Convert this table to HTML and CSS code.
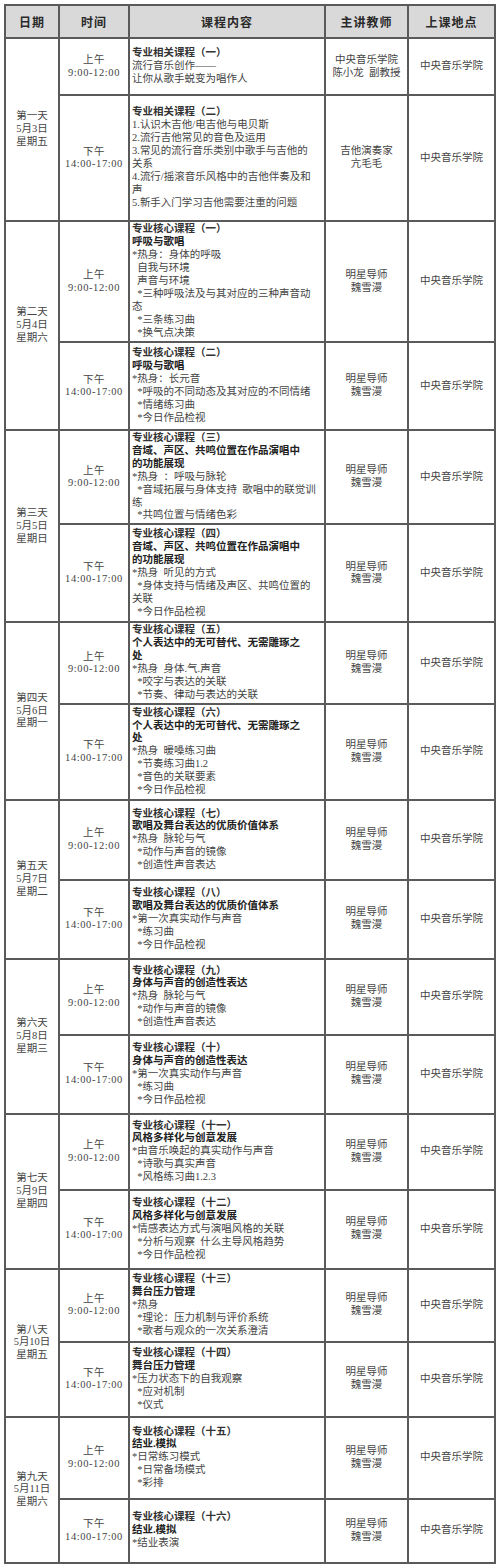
FILE: index.html
```html
<!DOCTYPE html>
<html lang="zh">
<head>
<meta charset="utf-8">
<title>课程安排</title>
<link rel="stylesheet" href="styles.css">
</head>
<body>
<div class="page">
<table class="sched">
<colgroup><col class="c-date"><col class="c-time"><col class="c-course"><col class="c-teacher"><col class="c-place"></colgroup>
<thead>
<tr class="h33"><th>日期</th><th>时间</th><th>课程内容</th><th>主讲教师</th><th>上课地点</th></tr>
</thead>
<tbody>
<tr class="h57">
<td class="date" rowspan="2"><div>第一天</div><div>5月3日</div><div>星期五</div></td>
<td class="time"><div>上午</div><div>9:00-12:00</div></td>
<td class="course"><div class="t1">专业相关课程（一）</div><div>流行音乐创作——</div><div>让你从歌手蜕变为唱作人</div></td>
<td class="teacher"><div>中央音乐学院</div><div>陈小龙&ensp;副教授</div></td>
<td class="place">中央音乐学院</td>
</tr>
<tr class="h126">
<td class="time"><div>下午</div><div>14:00-17:00</div></td>
<td class="course"><div class="t1">专业相关课程（二）</div><div>1.认识木吉他/电吉他与电贝斯</div><div>2.流行吉他常见的音色及运用</div><div>3.常见的流行音乐类别中歌手与吉他的</div><div>关系</div><div>4.流行/摇滚音乐风格中的吉他伴奏及和</div><div>声</div><div>5.新手入门学习吉他需要注重的问题</div></td>
<td class="teacher"><div>吉他演奏家</div><div>亢毛毛</div></td>
<td class="place">中央音乐学院</td>
</tr>

<tr class="h121">
<td class="date" rowspan="2"><div>第二天</div><div>5月4日</div><div>星期六</div></td>
<td class="time"><div>上午</div><div>9:00-12:00</div></td>
<td class="course"><div class="t1">专业核心课程（一）</div><div class="t2">呼吸与歌唱</div><div>*热身：身体的呼吸</div><div>&ensp;自我与环境</div><div>&ensp;声音与环境</div><div>&ensp;*三种呼吸法及与其对应的三种声音动</div><div>态</div><div>&ensp;*三条练习曲</div><div>&ensp;*换气点决策</div></td>
<td class="teacher"><div>明星导师</div><div>魏雪漫</div></td>
<td class="place">中央音乐学院</td>
</tr>
<tr class="h88">
<td class="time"><div>下午</div><div>14:00-17:00</div></td>
<td class="course"><div class="t1">专业核心课程（二）</div><div class="t2">呼吸与歌唱</div><div>*热身：长元音</div><div>&ensp;*呼吸的不同动态及其对应的不同情绪</div><div>&ensp;*情绪练习曲</div><div>&ensp;*今日作品检视</div></td>
<td class="teacher"><div>明星导师</div><div>魏雪漫</div></td>
<td class="place">中央音乐学院</td>
</tr>

<tr class="h94">
<td class="date" rowspan="2"><div>第三天</div><div>5月5日</div><div>星期日</div></td>
<td class="time"><div>上午</div><div>9:00-12:00</div></td>
<td class="course"><div class="t1">专业核心课程（三）</div><div class="t2">音域、声区、共鸣位置在作品演唱中</div><div class="t2">的功能展现</div><div>*热身&ensp;：呼吸与脉轮</div><div>&ensp;*音域拓展与身体支持&ensp;歌唱中的联觉训</div><div>练</div><div>&ensp;*共鸣位置与情绪色彩</div></td>
<td class="teacher"><div>明星导师</div><div>魏雪漫</div></td>
<td class="place">中央音乐学院</td>
</tr>
<tr class="h98">
<td class="time"><div>下午</div><div>14:00-17:00</div></td>
<td class="course"><div class="t1">专业核心课程（四）</div><div class="t2">音域、声区、共鸣位置在作品演唱中</div><div class="t2">的功能展现</div><div>*热身&ensp;听见的方式</div><div>&ensp;*身体支持与情绪及声区、共鸣位置的</div><div>关联</div><div>&ensp;*今日作品检视</div></td>
<td class="teacher"><div>明星导师</div><div>魏雪漫</div></td>
<td class="place">中央音乐学院</td>
</tr>

<tr class="h80">
<td class="date" rowspan="2"><div>第四天</div><div>5月6日</div><div>星期一</div></td>
<td class="time"><div>上午</div><div>9:00-12:00</div></td>
<td class="course"><div class="t1">专业核心课程（五）</div><div class="t2">个人表达中的无可替代、无需雕琢之</div><div class="t2">处</div><div>*热身&ensp;身体.气.声音</div><div>&ensp;*咬字与表达的关联</div><div>&ensp;*节奏、律动与表达的关联</div></td>
<td class="teacher"><div>明星导师</div><div>魏雪漫</div></td>
<td class="place">中央音乐学院</td>
</tr>
<tr class="h96">
<td class="time"><div>下午</div><div>14:00-17:00</div></td>
<td class="course"><div class="t1">专业核心课程（六）</div><div class="t2">个人表达中的无可替代、无需雕琢之</div><div class="t2">处</div><div>*热身&ensp;暖嗓练习曲</div><div>&ensp;*节奏练习曲1.2</div><div>&ensp;*音色的关联要素</div><div>&ensp;*今日作品检视</div></td>
<td class="teacher"><div>明星导师</div><div>魏雪漫</div></td>
<td class="place">中央音乐学院</td>
</tr>

<tr class="h80">
<td class="date" rowspan="2"><div>第五天</div><div>5月7日</div><div>星期二</div></td>
<td class="time"><div>上午</div><div>9:00-12:00</div></td>
<td class="course"><div class="t1">专业核心课程（七）</div><div class="t2">歌唱及舞台表达的优质价值体系</div><div>*热身&ensp;脉轮与气</div><div>&ensp;*动作与声音的镜像</div><div>&ensp;*创造性声音表达</div></td>
<td class="teacher"><div>明星导师</div><div>魏雪漫</div></td>
<td class="place">中央音乐学院</td>
</tr>
<tr class="h79">
<td class="time"><div>下午</div><div>14:00-17:00</div></td>
<td class="course"><div class="t1">专业核心课程（八）</div><div class="t2">歌唱及舞台表达的优质价值体系</div><div>*第一次真实动作与声音</div><div>&ensp;*练习曲</div><div>&ensp;*今日作品检视</div></td>
<td class="teacher"><div>明星导师</div><div>魏雪漫</div></td>
<td class="place">中央音乐学院</td>
</tr>

<tr class="h76">
<td class="date" rowspan="2"><div>第六天</div><div>5月8日</div><div>星期三</div></td>
<td class="time"><div>上午</div><div>9:00-12:00</div></td>
<td class="course"><div class="t1">专业核心课程（九）</div><div class="t2">身体与声音的创造性表达</div><div>*热身&ensp;脉轮与气</div><div>&ensp;*动作与声音的镜像</div><div>&ensp;*创造性声音表达</div></td>
<td class="teacher"><div>明星导师</div><div>魏雪漫</div></td>
<td class="place">中央音乐学院</td>
</tr>
<tr class="h79">
<td class="time"><div>下午</div><div>14:00-17:00</div></td>
<td class="course"><div class="t1">专业核心课程（十）</div><div class="t2">身体与声音的创造性表达</div><div>*第一次真实动作与声音</div><div>&ensp;*练习曲</div><div>&ensp;*今日作品检视</div></td>
<td class="teacher"><div>明星导师</div><div>魏雪漫</div></td>
<td class="place">中央音乐学院</td>
</tr>

<tr class="h76">
<td class="date" rowspan="2"><div>第七天</div><div>5月9日</div><div>星期四</div></td>
<td class="time"><div>上午</div><div>9:00-12:00</div></td>
<td class="course"><div class="t1">专业核心课程（十一）</div><div class="t2">风格多样化与创意发展</div><div>*由音乐唤起的真实动作与声音</div><div>&ensp;*诗歌与真实声音</div><div>&ensp;*风格练习曲1.2.3</div></td>
<td class="teacher"><div>明星导师</div><div>魏雪漫</div></td>
<td class="place">中央音乐学院</td>
</tr>
<tr class="h79">
<td class="time"><div>下午</div><div>14:00-17:00</div></td>
<td class="course"><div class="t1">专业核心课程（十二）</div><div class="t2">风格多样化与创意发展</div><div>*情感表达方式与演唱风格的关联</div><div>&ensp;*分析与观察&ensp;什么主导风格趋势</div><div>&ensp;*今日作品检视</div></td>
<td class="teacher"><div>明星导师</div><div>魏雪漫</div></td>
<td class="place">中央音乐学院</td>
</tr>

<tr class="h73">
<td class="date" rowspan="2"><div>第八天</div><div>5月10日</div><div>星期五</div></td>
<td class="time"><div>上午</div><div>9:00-12:00</div></td>
<td class="course"><div class="t1">专业核心课程（十三）</div><div class="t2">舞台压力管理</div><div>*热身</div><div>&ensp;*理论：压力机制与评价系统</div><div>&ensp;*歌者与观众的一次关系澄清</div></td>
<td class="teacher"><div>明星导师</div><div>魏雪漫</div></td>
<td class="place">中央音乐学院</td>
</tr>
<tr class="h75">
<td class="time"><div>下午</div><div>14:00-17:00</div></td>
<td class="course"><div class="t1">专业核心课程（十四）</div><div class="t2">舞台压力管理</div><div>*压力状态下的自我观察</div><div>&ensp;*应对机制</div><div>&ensp;*仪式</div></td>
<td class="teacher"><div>明星导师</div><div>魏雪漫</div></td>
<td class="place">中央音乐学院</td>
</tr>

<tr class="h82">
<td class="date" rowspan="2"><div>第九天</div><div>5月11日</div><div>星期六</div></td>
<td class="time"><div>上午</div><div>9:00-12:00</div></td>
<td class="course"><div class="t1">专业核心课程（十五）</div><div class="t2">结业.模拟</div><div>*日常练习模式</div><div>&ensp;*日常备场模式</div><div>&ensp;*彩排</div></td>
<td class="teacher"><div>明星导师</div><div>魏雪漫</div></td>
<td class="place">中央音乐学院</td>
</tr>
<tr class="h64">
<td class="time"><div>下午</div><div>14:00-17:00</div></td>
<td class="course"><div class="t1">专业核心课程（十六）</div><div class="t2">结业.模拟</div><div>*结业表演</div></td>
<td class="teacher"><div>明星导师</div><div>魏雪漫</div></td>
<td class="place">中央音乐学院</td>
</tr>
</tbody>
</table>
</div>
</body>
</html>
```

FILE: styles.css
```css
html, body {
  margin: 0;
  padding: 0;
  background: #ffffff;
}

.page {
  padding: 4px 0 0 4px;
}

.sched {
  border-collapse: collapse;
  table-layout: fixed;
  width: 492px;
  font-family: "Liberation Serif", "Noto Sans CJK SC", serif;
  font-size: 10.5px;
  color: #444444;
}

.c-date { width: 54px; }
.c-time { width: 70px; }
.c-course { width: 196px; }
.c-teacher { width: 83px; }
.c-place { width: 87px; }

.sched th,
.sched td {
  border: 2px solid #5a5a5a;
  padding: 1px 2px;
  vertical-align: middle;
}

.sched th {
  background: #d9d9d9;
  font-family: "Noto Sans CJK SC", sans-serif;
  font-size: 12px;
  font-weight: 700;
  letter-spacing: 1px;
  color: #2a2a2a;
  text-align: center;
}

.date,
.time,
.teacher,
.place {
  text-align: center;
  line-height: 12.8px;
}

.date {
  font-size: 10.5px;
}

.time {
  font-size: 10.5px;
  letter-spacing: 0.6px;
  line-height: 12.3px;
}

.course {
  text-align: left;
  padding-left: 3px;
  line-height: 12.9px;
  white-space: pre;
}

.t1 {
  font-weight: 700;
  color: #333333;
}

.t2 {
  font-weight: 700;
  color: #222222;
}

.h33 { height: 33px; }
.h57 { height: 57px; }
.h126 { height: 126px; }
.h121 { height: 121px; }
.h88 { height: 88px; }
.h94 { height: 94px; }
.h98 { height: 98px; }
.h80 { height: 80px; }
.h96 { height: 96px; }
.h79 { height: 79px; }
.h76 { height: 76px; }
.h73 { height: 73px; }
.h75 { height: 75px; }
.h82 { height: 82px; }
.h64 { height: 64px; }
```
